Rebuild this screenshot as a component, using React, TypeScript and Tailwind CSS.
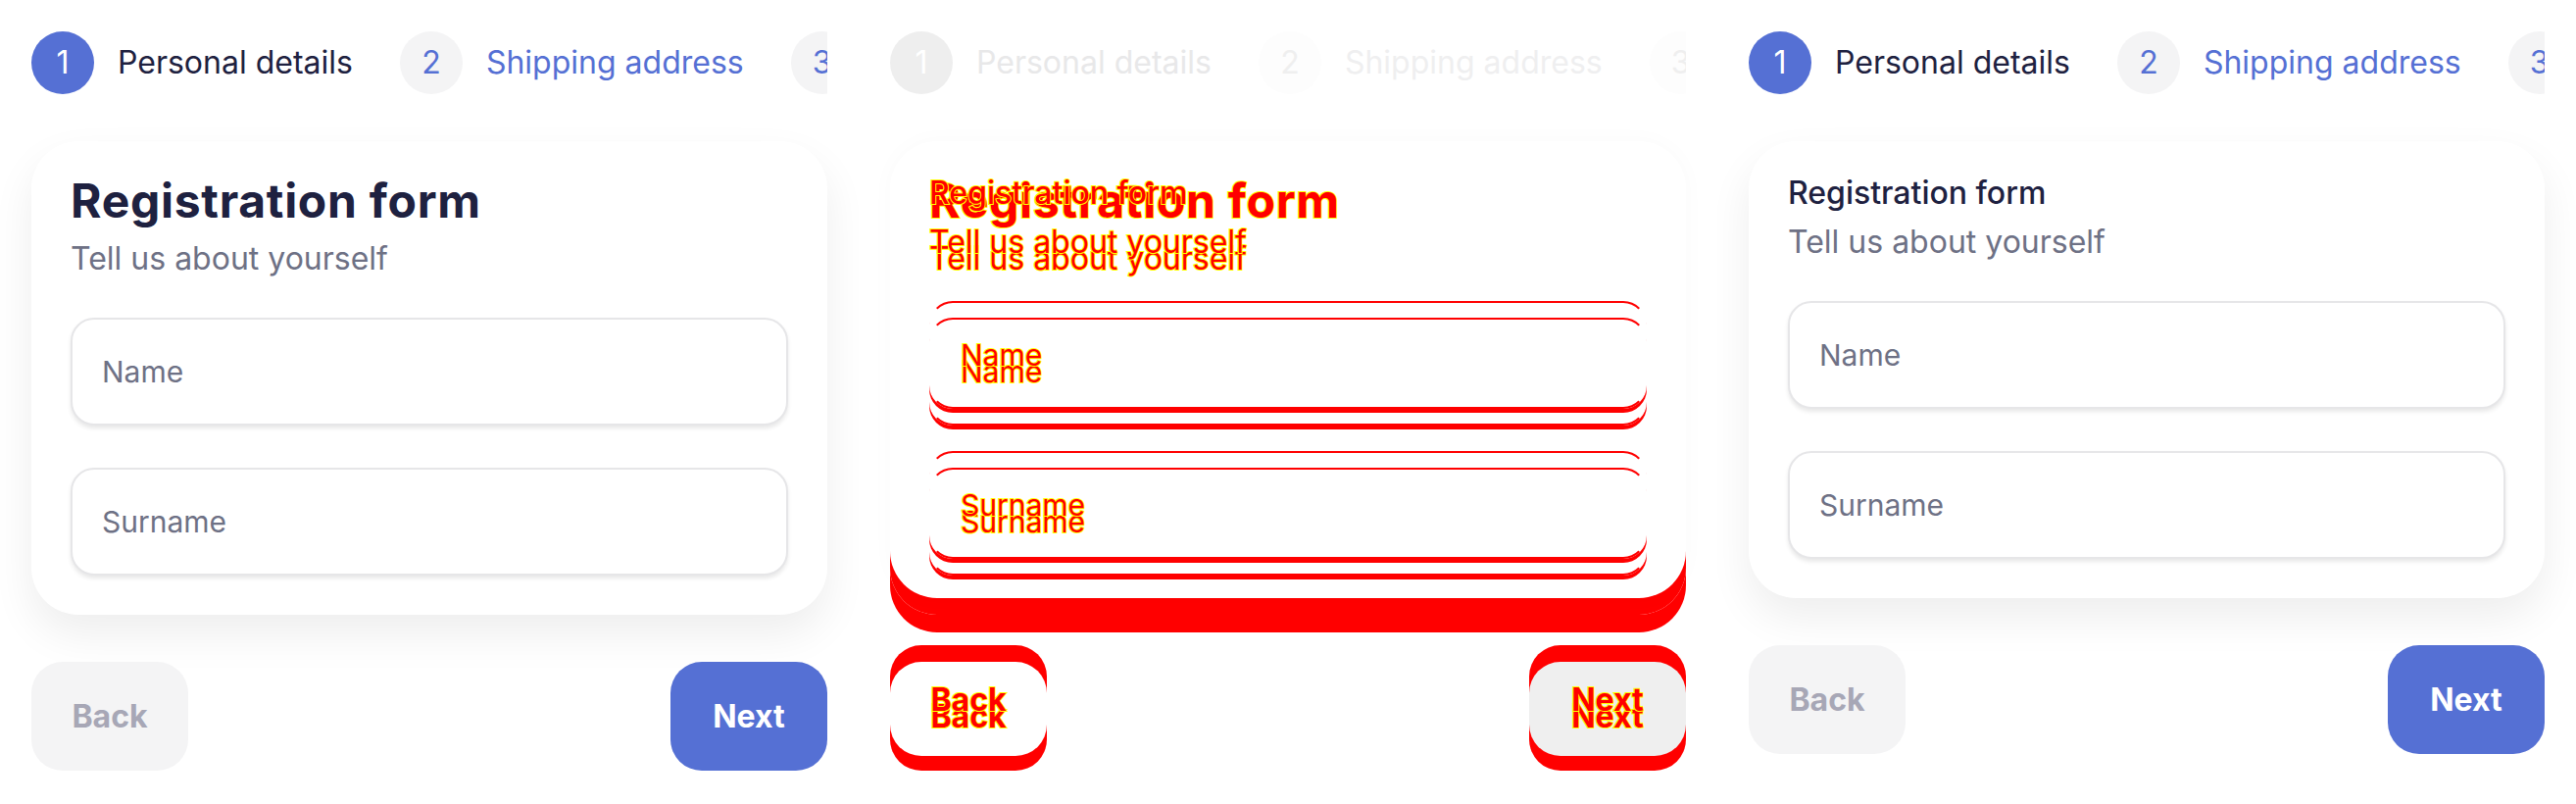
import { FC } from "react";

type Variant = "lg" | "sm";

const FONT = "font-['Inter','Noto_Sans',sans-serif]";
const DIFF_TEXT = "text-[#ff0000] [-webkit-text-stroke:2px_#ffff00] [paint-order:stroke_fill]";

const steps = [
  { n: "1", label: "Personal details", active: true },
  { n: "2", label: "Shipping address", active: false },
  { n: "3", label: "Payment", active: false },
];

const Stepper: FC<{ faded?: boolean }> = ({ faded }) => (
  <div className="flex h-16 w-full items-center gap-12 overflow-hidden">
    {steps.map((s) => (
      <div key={s.n} className="flex shrink-0 items-center gap-6">
        <div
          className={`flex h-16 w-16 items-center justify-center rounded-full text-[32px] ${
            faded
              ? s.active
                ? "bg-[#eeeeee] text-white"
                : "bg-[#fdfdfd] text-[#efefef]"
              : s.active
              ? "bg-[#5570d4] text-white"
              : "bg-[#f4f4f5] text-[#5570d4]"
          }`}
        >
          {s.n}
        </div>
        <span
          className={`whitespace-nowrap text-[32px] leading-none ${
            faded
              ? s.active
                ? "text-[#e8e8e9]"
                : "text-[#efeff0]"
              : s.active
              ? "text-[#1e2140]"
              : "text-[#5570d4]"
          }`}
        >
          {s.label}
        </span>
      </div>
    ))}
  </div>
);

const Heading: FC<{ variant: Variant; diff?: boolean }> = ({ variant, diff }) => (
  <>
    <h1
      className={`relative z-30 ${
        variant === "lg"
          ? "text-[48px] leading-[42px] font-bold tracking-[0.015em]"
          : "text-[32px] leading-[25px] font-medium"
      } ${diff ? DIFF_TEXT : "text-[#1e2140]"}`}
    >
      Registration form
    </h1>
    <p
      className={`relative z-30 mt-[18px] text-[32px] leading-[40px] ${
        diff ? DIFF_TEXT : "text-[#6e7185]"
      }`}
    >
      Tell us about yourself
    </p>
  </>
);

const Field: FC<{ label: string; diff?: boolean }> = ({ label, diff }) => (
  <div
    className={`flex h-[110px] items-center rounded-[24px] border-2 px-[30px] text-[30px] ${
      diff
        ? "relative z-10 border-[#ff0000] border-x-transparent shadow-[0_4px_0_#ff0000]"
        : "border-[#e6e6e8] bg-white shadow-[0_3px_4px_rgba(0,0,0,0.09)]"
    }`}
  >
    <span className={`relative z-30 ${diff ? DIFF_TEXT : "text-[#6e7185]"}`}>{label}</span>
  </div>
);

const Panel: FC<{ variant: Variant }> = ({ variant }) => (
  <div className="flex w-[876px] shrink-0 flex-col self-start rounded-bl-[18px] bg-white p-8">
    <Stepper />
    <div className="mt-12 flex flex-col rounded-[48px] bg-white p-10 shadow-[0_20px_44px_rgba(0,0,0,0.07)]">
      <Heading variant={variant} />
      <div className="mt-10 flex flex-col gap-[43px]">
        <Field label="Name" />
        <Field label="Surname" />
      </div>
    </div>
    <div className="mt-12 flex items-center justify-between">
      <button className="h-[111px] w-40 rounded-[32px] bg-[#f4f4f5] text-[32px] font-bold text-[#a7a7b6]">
        Back
      </button>
      <button className="h-[111px] w-40 rounded-[32px] bg-[#5570d4] text-[32px] font-bold text-white">
        Next
      </button>
    </div>
  </div>
);

// one copy of the form drawn the way the diff image shows it
const DiffLayer: FC<{ variant: Variant; base?: boolean }> = ({ variant, base }) => (
  <div className={`${base ? "" : "absolute inset-0"} flex flex-col p-8`}>
    {base ? <Stepper faded /> : <div className="h-16" />}
    <div
      className={`mt-12 flex flex-col rounded-[48px] p-10 ${
        base
          ? "bg-[linear-gradient(to_bottom,#ffffff_0,#ffffff_400px,#ff0000_400px)] shadow-[0_18px_0_#ff0000]"
          : "bg-white shadow-[0_0_24px_rgba(0,0,0,0.025)]"
      }`}
    >
      <Heading variant={variant} diff />
      <div className="mt-10 flex flex-col gap-[43px]">
        <Field label="Name" diff />
        <Field label="Surname" diff />
      </div>
    </div>
    <div className="mt-12 flex items-center justify-between">
      {[
        { t: "Back", keep: "bg-white" },
        { t: "Next", keep: "bg-[#efefef]" },
      ].map((b) => (
        <div key={b.t} className="relative h-[111px] w-40 rounded-[32px] bg-[#ff0000]">
          {base && <div className={`relative z-20 h-24 rounded-[32px] ${b.keep}`} />}
          <span
            className={`absolute inset-0 z-30 flex items-center justify-center text-[32px] font-bold ${DIFF_TEXT}`}
          >
            {b.t}
          </span>
        </div>
      ))}
    </div>
  </div>
);

const DiffPanel: FC = () => (
  <div className="relative isolate w-[876px] shrink-0 self-start bg-white">
    <DiffLayer variant="lg" base />
    <DiffLayer variant="sm" />
  </div>
);

const App: FC = () => {
  return (
    <div className={`flex h-[820px] w-[2628px] overflow-hidden bg-white ${FONT}`}>
      <Panel variant="lg" />
      <DiffPanel />
      <Panel variant="sm" />
    </div>
  );
};

export default App;
